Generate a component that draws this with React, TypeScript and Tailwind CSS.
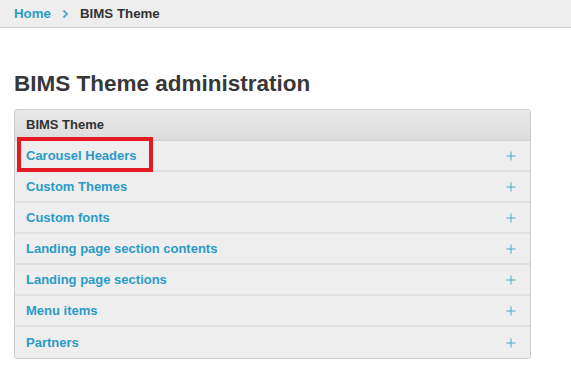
const items = [
  'Carousel Headers',
  'Custom Themes',
  'Custom fonts',
  'Landing page section contents',
  'Landing page sections',
  'Menu items',
  'Partners',
];

const Plus = () => (
  <svg width="10" height="10" viewBox="0 0 10 10" className="shrink-0">
    <path d="M5 0.5V9.5M0.5 5H9.5" stroke="#4aa8c8" strokeWidth="1" />
  </svg>
);

export default function App() {
  return (
    <div className="min-h-[385px] w-[571px] bg-white font-['Liberation_Sans',Arial,sans-serif] text-[13px]">
      <div className="flex h-[28px] items-center gap-[11px] border-b border-[#cfcfcf] bg-[#eeeeee] px-[14px] text-[13.3px] font-bold">
        <span className="text-[#2a9bc8]">Home</span>
        <span>
          <svg width="7" height="10" viewBox="0 0 7 10">
            <path d="M1.5 1.5L5 5L1.5 8.5" fill="none" stroke="#5aaed0" strokeWidth="2" />
          </svg>
        </span>
        <span className="text-[#333333]">BIMS Theme</span>
      </div>

      <h1 className="mt-[42px] px-[14px] text-[22.5px] font-bold leading-[27px] text-[#383838]">
        BIMS Theme administration
      </h1>

      <div className="mx-[14px] mt-[12px] w-[517px] overflow-hidden rounded-[3px] border border-[#cccccc]">
        <div className="flex h-[31px] items-center border-b border-[#d2d2d2] bg-gradient-to-b from-[#e9e9e9] to-[#dcdcdc] px-[11px] font-bold text-[#333333]">
          BIMS Theme
        </div>
        {items.map((label, i) => (
          <div
            key={label}
            className={
              'relative flex h-[31px] items-center justify-between bg-[#eeeeee] pl-[11px] pr-[14px] font-bold text-[#2a9bc8] ' +
              (i < items.length - 1 ? 'border-b-2 border-[#e0e0e0]' : '')
            }
          >
            <span>{label}</span>
            <Plus />
            {i === 0 && (
              <div className="pointer-events-none absolute left-[2px] top-[-4px] h-[35px] w-[136px] border-4 border-[#e41b23]" />
            )}
          </div>
        ))}
      </div>
    </div>
  );
}
